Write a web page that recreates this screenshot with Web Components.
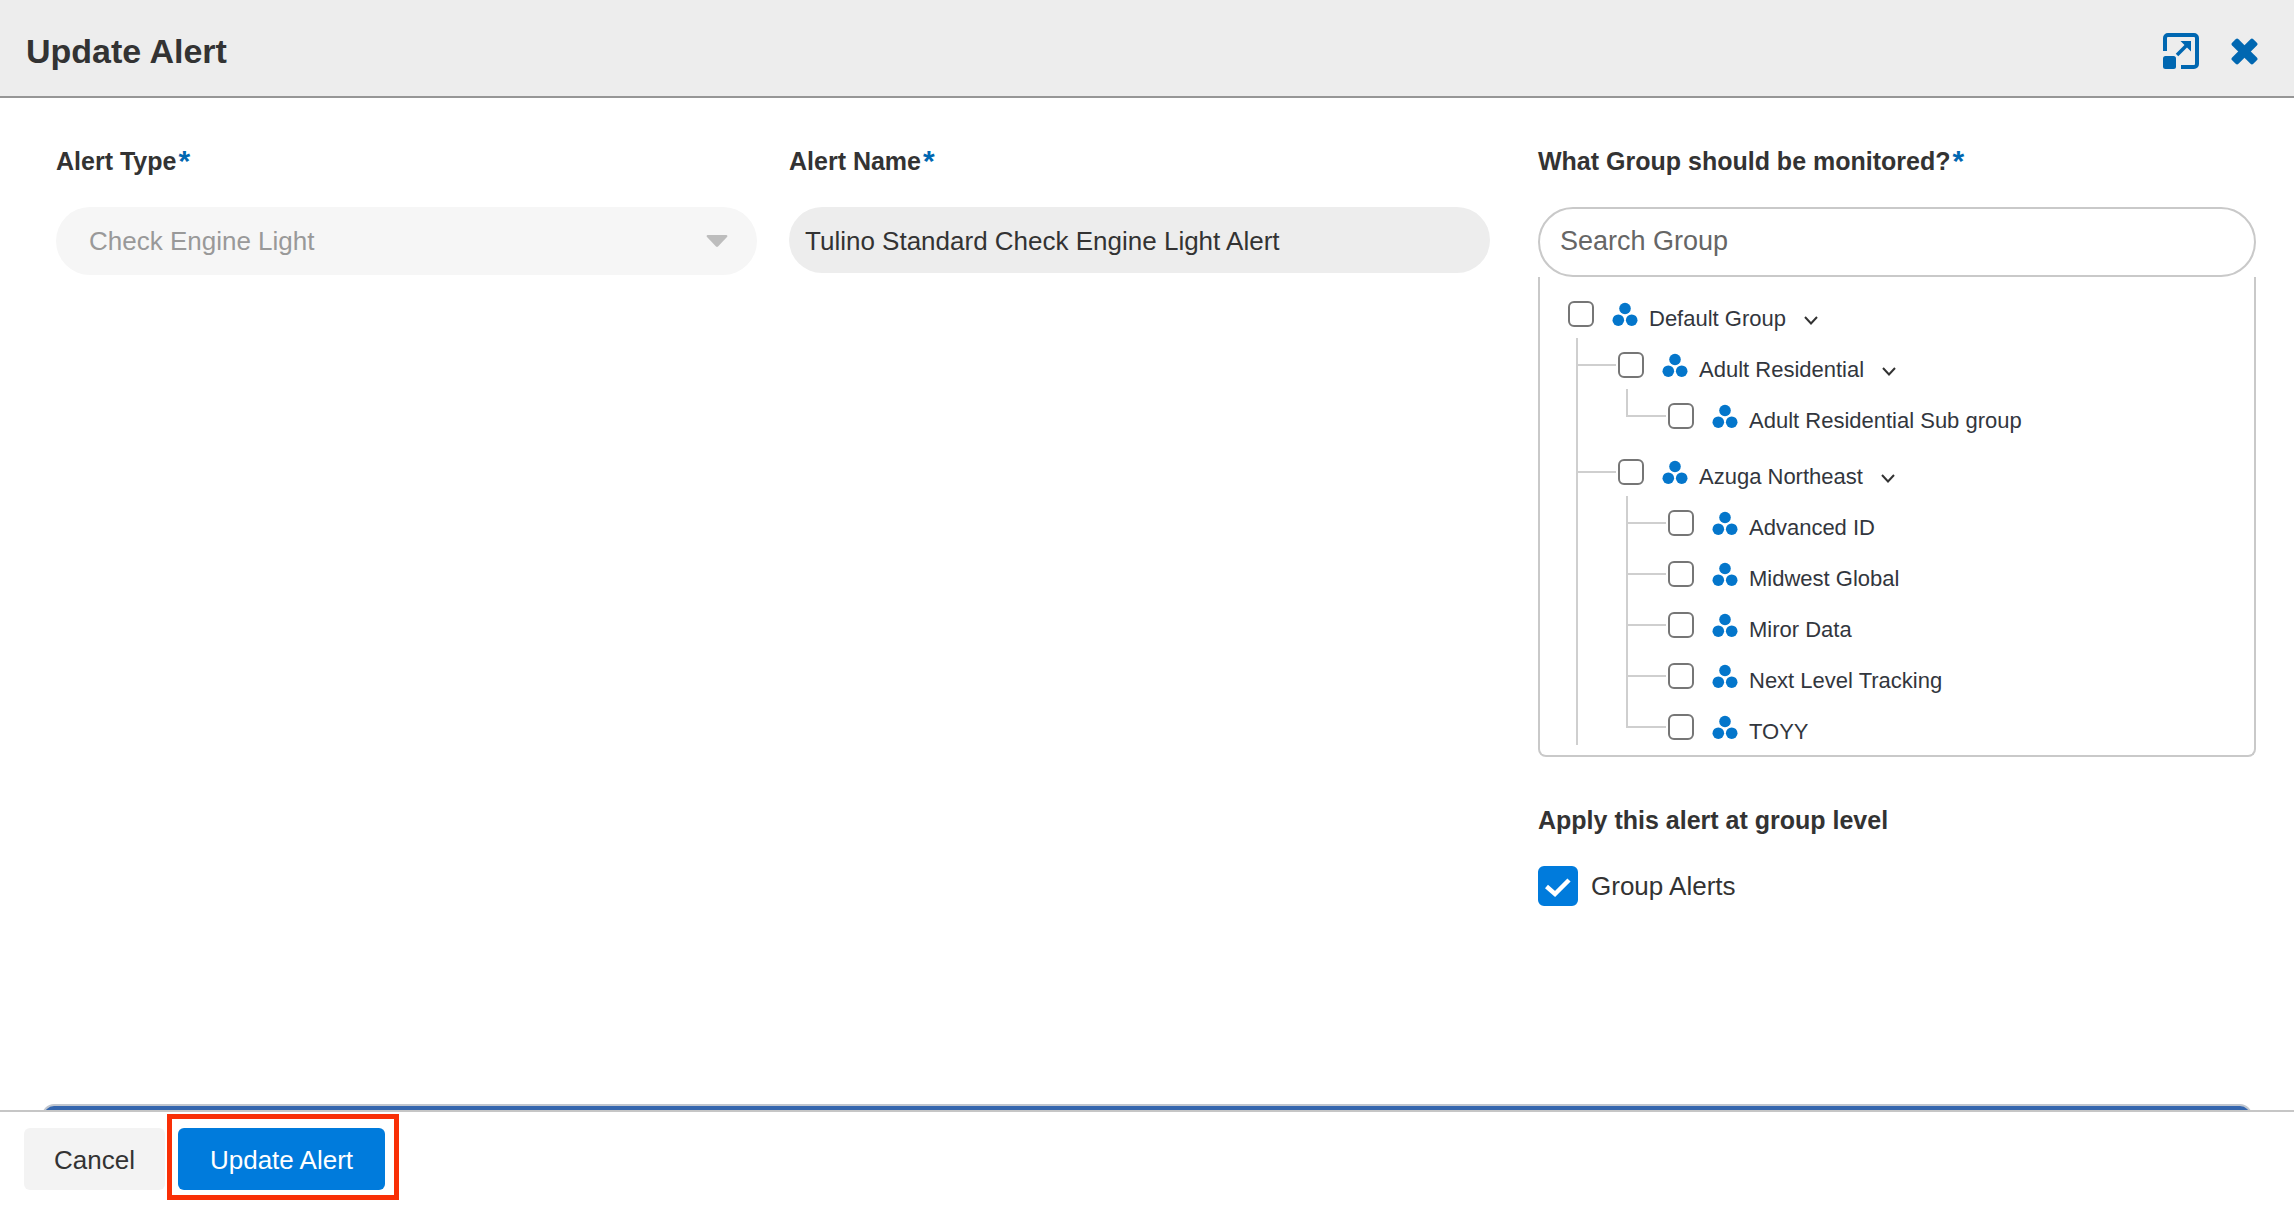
<!DOCTYPE html>
<html lang="en">
<head>
<meta charset="utf-8">
<title>Update Alert</title>
<style>
  body {
    margin: 0;
    background: #fff;
    color: #333;
    font-family: "Liberation Sans", Arial, Helvetica, sans-serif;
    font-size: 26px;
  }
</style>
</head>
<body>
<alert-dialog heading="Update Alert">
  <form-field label="Alert Type" required>
    <type-select value="Check Engine Light"></type-select>
  </form-field>
  <form-field label="Alert Name" required>
    <text-box label="Alert Name" value="Tulino Standard Check Engine Light Alert"></text-box>
  </form-field>
  <field-stack>
    <form-field label="What Group should be monitored?" required>
      <group-picker placeholder="Search Group">
        <group-node label="Default Group" open>
          <group-node label="Adult Residential" open nested>
            <group-node label="Adult Residential Sub group" nested></group-node>
          </group-node>
          <group-node label="Azuga Northeast" open nested more>
            <group-node label="Advanced ID" nested></group-node>
            <group-node label="Midwest Global" nested></group-node>
            <group-node label="Miror Data" nested></group-node>
            <group-node label="Next Level Tracking" nested></group-node>
            <group-node label="TOYY" nested></group-node>
          </group-node>
        </group-node>
      </group-picker>
    </form-field>
    <form-field label="Apply this alert at group level">
      <check-box label="Group Alerts"></check-box>
    </form-field>
  </field-stack>
  <action-button slot="actions">Cancel</action-button>
  <action-button slot="actions" primary highlighted>Update Alert</action-button>
</alert-dialog>

<script>
class BaseElement extends HTMLElement {
  constructor() {
    super();
    this.attachShadow({ mode: "open" });
  }

  connectedCallback() {
    this.shadowRoot.innerHTML = `<style>
      * { box-sizing: border-box; }
      button, input, select { font: inherit; color: inherit; margin: 0; }
      svg { display: block; flex: none; }
    </style>${this.render()}`;
  }

  attr(name) {
    return this.getAttribute(name) || "";
  }
}

class AlertDialog extends BaseElement {
  render() {
    return `<style>
      :host {
        display: flex;
        flex-direction: column;
        min-height: 100vh;
      }
      header {
        display: flex;
        align-items: center;
        justify-content: space-between;
        height: 98px;
        box-sizing: border-box;
        padding: 6px 36px 0 26px;
        background: #ededed;
        border-bottom: 2px solid #969696;
      }
      h1 {
        margin: 0;
        font-size: 34px;
        line-height: 40px;
      }
      .tools {
        display: flex;
        align-items: center;
        gap: 32px;
        color: #0067b1;
      }
      .tools button {
        padding: 0;
        border: 0;
        background: none;
      }
      main {
        flex: 1;
        display: flex;
        flex-direction: column;
      }
      .fields {
        display: grid;
        grid-template-columns: 701fr 701fr 734fr;
        gap: 32px;
        align-items: start;
        padding: 48px 38px 48px 56px;
      }
      .next {
        height: 6px;
        margin: auto 42px 0;
        overflow: hidden;
      }
      .next div {
        height: 40px;
        border: 2px solid #c0c6cf;
        border-radius: 12px;
        background: #3466ae;
      }
      footer {
        display: flex;
        gap: 13px;
        padding: 16px 24px;
        border-top: 2px solid #c6c6c6;
      }
    </style>
    <header>
      <h1>${this.attr("heading")}</h1>
      <div class="tools">
        <button aria-label="Expand">
          <svg width="36" height="36" viewBox="0 0 36 36" fill="none">
            <path d="M2 18V5a3 3 0 0 1 3-3H31a3 3 0 0 1 3 3V31a3 3 0 0 1-3 3H18" stroke="currentColor" stroke-width="4"/>
            <rect y="23" width="13" height="13" rx="2.5" fill="currentColor"/>
            <path d="M14 22L24 12" stroke="currentColor" stroke-width="3.5"/>
            <path d="M17.5 8H28V18.5Z" fill="currentColor"/>
          </svg>
        </button>
        <button aria-label="Close">
          <svg width="27" height="27" viewBox="0 0 27 27" fill="currentColor">
            <rect x="-1.5" y="9" width="30" height="9" rx="2" transform="rotate(45 13.5 13.5)"/>
            <rect x="-1.5" y="9" width="30" height="9" rx="2" transform="rotate(-45 13.5 13.5)"/>
          </svg>
        </button>
      </div>
    </header>
    <main>
      <div class="fields"><slot></slot></div>
      <div class="next"><div></div></div>
    </main>
    <footer><slot name="actions"></slot></footer>`;
  }
}

class FieldStack extends BaseElement {
  render() {
    return `<style>
      :host {
        display: flex;
        flex-direction: column;
        gap: 48px;
        padding-left: 16px;
      }
    </style>
    <slot></slot>`;
  }
}

class FormField extends BaseElement {
  render() {
    const star = this.hasAttribute("required") ? "<b>*</b>" : "";
    return `<style>
      :host { display: block; }
      .label {
        display: block;
        margin-bottom: 31px;
        font-size: 25px;
        font-weight: bold;
        line-height: 30px;
      }
      b {
        margin-left: 2px;
        color: #0067b1;
        font-size: 30px;
        vertical-align: top;
      }
    </style>
    <label class="label">${this.attr("label")}${star}</label>
    <slot></slot>`;
  }

  connectedCallback() {
    super.connectedCallback();
    // a label cannot point into another shadow root, so pass the focus on
    this.shadowRoot.querySelector("label").addEventListener("click", () => {
      const control = this.firstElementChild.shadowRoot.querySelector("input, select");
      control && control.focus();
    });
  }
}

class TypeSelect extends BaseElement {
  render() {
    return `<style>
      :host {
        display: grid;
        align-items: center;
      }
      select, svg { grid-area: 1 / 1; }
      select {
        width: 100%;
        height: 68px;
        padding: 0 64px 0 33px;
        border: 0;
        border-radius: 34px;
        background: #f6f6f6;
        color: #999;
        opacity: 1;
        appearance: none;
      }
      svg {
        justify-self: end;
        margin-right: 29px;
        pointer-events: none;
      }
    </style>
    <select aria-label="Alert Type" disabled><option>${this.attr("value")}</option></select>
    <svg width="22" height="12" viewBox="0 0 22 12"><path d="M1.5 0H20.5Q22 .5 21 2L12 11.500Q11 12.300 10 11.500L1 2Q0 .5 1.500 0Z" fill="#bdbdbd"/></svg>`;
  }
}

class TextBox extends BaseElement {
  render() {
    return `<style>
      :host { display: block; }
      input {
        display: block;
        width: 100%;
        height: 66px;
        padding: 2px 16px 0;
        border: 0;
        border-radius: 33px;
        background: #ededed;
      }
    </style>
    <input type="text" aria-label="${this.attr("label")}" value="${this.attr("value")}">`;
  }
}

class GroupPicker extends BaseElement {
  render() {
    return `<style>
      :host { display: block; }
      input {
        display: block;
        width: 100%;
        height: 70px;
        padding: 0 20px 2px;
        border: 2px solid #c9c9c9;
        border-radius: 35px;
        background: #fff;
        font-size: 27px;
      }
      input::placeholder {
        color: #666;
        opacity: 1;
      }
      .tree {
        padding: 24px 28px 5px;
        border: 2px solid #c9c9c9;
        border-top: 0;
        border-radius: 0 0 8px 8px;
      }
    </style>
    <input type="text" aria-label="Search Group" placeholder="${this.attr("placeholder")}">
    <div class="tree"><slot></slot></div>`;
  }
}

class GroupNode extends BaseElement {
  render() {
    const open = this.hasAttribute("open");
    const toggle = `<button aria-label="Toggle ${this.attr("label")}">
      <svg width="14" height="9" viewBox="0 0 14 9" fill="none"><path d="M1 1L7 7.500L13 1" stroke="#333" stroke-width="2"/></svg>
    </button>`;
    return `<style>
      :host {
        display: block;
        position: relative;
      }
      /* elbow from the parent's line to the tick box */
      :host([nested])::before {
        content: "";
        position: absolute;
        left: -42px;
        top: -14px;
        width: 40px;
        height: 28px;
        box-sizing: border-box;
        border-left: 2px solid #cfcfcf;
        border-bottom: 2px solid #cfcfcf;
      }
      /* line down to the next sibling */
      :host([nested]:not(:last-child))::after,
      :host([more])::after {
        content: "";
        position: absolute;
        left: -42px;
        top: 0;
        bottom: -20px;
        width: 2px;
        background: #cfcfcf;
      }
      :host([more])::after { bottom: 5px; }
      .row, label {
        display: flex;
        align-items: flex-start;
      }
      input {
        flex: none;
        width: 26px;
        height: 26px;
        margin-right: 18px;
        border: 2px solid #767676;
        border-radius: 6px;
        background: #fff;
        appearance: none;
      }
      input:checked { background: #007bdc; }
      span {
        padding: 5px 0 0 11px;
        color: #32363d;
        font-size: 22px;
        line-height: 26px;
      }
      button {
        margin: 15px 0 0 18px;
        padding: 0;
        border: 0;
        background: none;
      }
      .children {
        display: flex;
        flex-direction: column;
        gap: 20px;
        padding: 20px 0 5px 50px;
      }
      :host(:not([nested])) .children { padding-bottom: 0; }
    </style>
    <div class="row">
      <label>
        <input type="checkbox">
        <svg width="26" height="26" viewBox="0 0 26 26" fill="#0476cb">
          <circle cx="13" cy="7.500" r="5.800"/>
          <circle cx="6.300" cy="19.200" r="5.800"/>
          <circle cx="19.700" cy="19.200" r="5.800"/>
        </svg>
        <span>${this.attr("label")}</span>
      </label>
      ${open ? toggle : ""}
    </div>
    ${open ? '<div class="children"><slot></slot></div>' : ""}`;
  }

  connectedCallback() {
    super.connectedCallback();
    const button = this.shadowRoot.querySelector("button");
    button && button.addEventListener("click", () => {
      const children = this.shadowRoot.querySelector(".children");
      children.style.display = children.style.display ? "" : "none";
    });
  }
}

class CheckBox extends BaseElement {
  render() {
    return `<style>
      :host { display: block; }
      label {
        display: flex;
        align-items: center;
        gap: 13px;
      }
      .box { display: grid; }
      input, svg { grid-area: 1 / 1; }
      input {
        width: 40px;
        height: 40px;
        border: 2px solid #007bdc;
        border-radius: 6px;
        appearance: none;
      }
      input:checked { background: #007bdc; }
      svg { pointer-events: none; }
    </style>
    <label>
      <div class="box">
        <input type="checkbox" checked>
        <svg width="40" height="40" viewBox="0 0 40 40" fill="none"><path d="M8.500 20.500L17 28L31 14" stroke="#fff" stroke-width="4.500"/></svg>
      </div>
      ${this.attr("label")}
    </label>`;
  }
}

class ActionButton extends BaseElement {
  render() {
    return `<style>
      :host {
        display: block;
        position: relative;
      }
      button {
        height: 62px;
        padding: 2px 30px 0;
        border: 0;
        border-radius: 6px;
        background: #f3f3f3;
      }
      :host([primary]) button {
        padding: 2px 32px 0;
        background: #007bdc;
        color: #fff;
      }
      :host([highlighted])::after {
        content: "";
        position: absolute;
        inset: -14px -14px -10px -11px;
        border: 5px solid #f92f06;
        pointer-events: none;
      }
    </style>
    <button><slot></slot></button>`;
  }
}

customElements.define("alert-dialog", AlertDialog);
customElements.define("field-stack", FieldStack);
customElements.define("form-field", FormField);
customElements.define("type-select", TypeSelect);
customElements.define("text-box", TextBox);
customElements.define("group-picker", GroupPicker);
customElements.define("group-node", GroupNode);
customElements.define("check-box", CheckBox);
customElements.define("action-button", ActionButton);
</script>
</body>
</html>
